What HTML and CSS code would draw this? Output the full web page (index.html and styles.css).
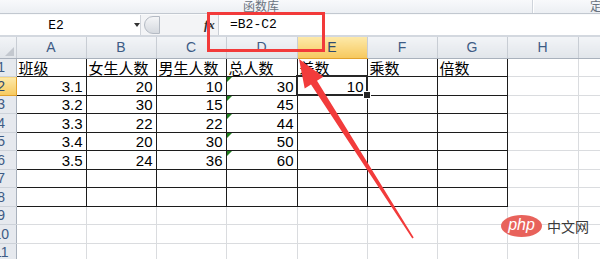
FILE: index.html
```html
<!DOCTYPE html>
<html lang="zh-CN">
<head>
    <meta charset="UTF-8">
    <meta name="viewport" content="width=device-width, initial-scale=1.0">
    <title>差数公式</title>
    <link rel="stylesheet" href="styles.css">
</head>
<body>
    <div class="ribbon">
        <div class="group"><span class="group-label">函数库</span></div>
        <div class="ribbon-sep"></div>
        <div class="group next"><span class="group-label">定</span></div>
    </div>

    <div class="formula-bar">
        <div class="name-box">
            <span class="cell-ref">E2</span>
            <span class="drop"></span>
        </div>
        <div class="bar-tools">
            <span class="grip"></span>
            <span class="fx">fx</span>
        </div>
        <div class="formula">=B2-C2</div>
    </div>

    <table class="sheet">
        <colgroup>
            <col class="c-head">
            <col class="c70"><col class="c70"><col class="c70"><col class="c71">
            <col class="c70"><col class="c70"><col class="c70"><col class="c71">
            <col class="c-rest">
        </colgroup>
        <thead>
            <tr>
                <th class="corner"><span class="corner-mark"></span></th>
                <th>A</th><th>B</th><th>C</th><th>D</th>
                <th class="active">E</th><th>F</th><th>G</th><th>H</th><th></th>
            </tr>
        </thead>
        <tbody>
            <tr>
                <th>1</th>
                <td class="text">班级</td><td class="text">女生人数</td><td class="text">男生人数</td>
                <td class="text">总人数</td><td class="text">差数</td><td class="text">乘数</td>
                <td class="text">倍数</td><td></td><td></td>
            </tr>
            <tr>
                <th class="active">2</th>
                <td>3.1</td><td>20</td><td>10</td><td class="flag">30</td>
                <td class="selected">10</td><td></td><td></td><td></td><td></td>
            </tr>
            <tr>
                <th>3</th>
                <td>3.2</td><td>30</td><td>15</td><td class="flag">45</td>
                <td></td><td></td><td></td><td></td><td></td>
            </tr>
            <tr>
                <th>4</th>
                <td>3.3</td><td>22</td><td>22</td><td class="flag">44</td>
                <td></td><td></td><td></td><td></td><td></td>
            </tr>
            <tr>
                <th>5</th>
                <td>3.4</td><td>20</td><td>30</td><td class="flag">50</td>
                <td></td><td></td><td></td><td></td><td></td>
            </tr>
            <tr>
                <th>6</th>
                <td>3.5</td><td>24</td><td>36</td><td class="flag">60</td>
                <td></td><td></td><td></td><td></td><td></td>
            </tr>
            <tr>
                <th>7</th>
                <td></td><td></td><td></td><td></td><td></td><td></td><td></td><td></td><td></td>
            </tr>
            <tr>
                <th>8</th>
                <td></td><td></td><td></td><td></td><td></td><td></td><td></td><td></td><td></td>
            </tr>
            <tr>
                <th>9</th>
                <td></td><td></td><td></td><td></td><td></td><td></td><td></td><td></td><td></td>
            </tr>
            <tr>
                <th>10</th>
                <td></td><td></td><td></td><td></td><td></td><td></td><td></td><td></td><td></td>
            </tr>
            <tr>
                <th>11</th>
                <td></td><td></td><td></td><td></td><td></td><td></td><td></td><td></td><td></td>
            </tr>
        </tbody>
    </table>

    <!-- annotation drawn over the screenshot -->
    <div class="callout"></div>
    <svg class="arrow" width="600" height="259" viewBox="0 0 600 259">
        <polygon points="299,59 323.3,76.7 317,80.7 413.7,237.6 412.3,238.4 311,84.5 304.7,88.5" fill="#f23b3b"/>
    </svg>

    <div class="watermark">
        <span class="php">php</span>
        <span class="cn">中文网</span>
    </div>
</body>
</html>
```

FILE: styles.css
```css
* {
    margin: 0;
    padding: 0;
    box-sizing: border-box;
}

body {
    width: 600px;
    height: 259px;
    overflow: hidden;
    position: relative;
    background-color: #fff;
    font-family: "Liberation Sans", "Noto Sans CJK SC", sans-serif;
    color: #000;
}

/* ribbon strip */
.ribbon {
    display: grid;
    grid-template-columns: 532px 1px 1fr;
    height: 14px;
    background: linear-gradient(#f8f9fb, #eceff3);
    border-bottom: 1px solid #c2c8d0;
    overflow: hidden;
}

.group {
    display: flex;
    align-items: flex-end;
    padding-left: 243px;
    padding-bottom: 7px;
}

.group.next {
    padding-left: 57px;
}

.group-label {
    font-family: "Noto Sans CJK SC", sans-serif;
    font-size: 12px;
    line-height: 12px;
    color: #6a7380;
}

.ribbon-sep {
    background-color: #cfd4db;
    box-shadow: 1px 0 0 #fff;
}

/* formula bar */
.formula-bar {
    display: flex;
    height: 23px;
    border-top: 1px solid #f9fafb;
    border-bottom: 2px solid #d3d8df;
    background-color: #f3f4f6;
}

.name-box {
    width: 141px;
    display: flex;
    align-items: center;
    background-color: #fff;
    border-right: 1px solid #d0d4da;
}

.cell-ref {
    width: 113px;
    text-align: center;
    font-family: "Liberation Mono", monospace;
    font-size: 13px;
}

.drop {
    margin-left: 22px;
    border-left: 3.5px solid transparent;
    border-right: 3.5px solid transparent;
    border-top: 4px solid #333;
}

.bar-tools {
    width: 77px;
    display: flex;
    align-items: center;
}

.grip {
    margin-left: 3px;
    width: 16px;
    height: 18px;
    border-radius: 9px 0 0 9px;
    border: 1px solid #b4bac3;
    background: linear-gradient(#f4f5f7, #d5d9df);
}

.fx {
    margin-left: 44px;
    font-family: "Liberation Serif", serif;
    font-style: italic;
    font-weight: bold;
    font-size: 13px;
    color: #333;
}

.formula {
    flex: 1;
    background-color: #fff;
    border-left: 1px solid #c9ced5;
    padding-left: 11px;
    font-family: "Liberation Mono", monospace;
    font-size: 13px;
    line-height: 20px;
}

/* sheet grid */
.sheet {
    border-collapse: collapse;
    table-layout: fixed;
    width: 621px;
    margin-left: -13px;
}

.c-head { width: 29px; }
.c70 { width: 70px; }
.c71 { width: 71px; }
.c-rest { width: 30px; }

.sheet th {
    font-weight: normal;
    font-size: 14px;
    color: #3d5b85;
}

.sheet thead th {
    height: 21px;
    background: linear-gradient(#f2f4f7, #e1e5ea);
    border-right: 1px solid #c8cdd4;
    border-bottom: 1px solid #a9b1bc;
}

.sheet tbody th {
    height: 18.5px;
    line-height: 16px;
    background-color: #e6e9ee;
    border-right: 1px solid #a9b1bc;
    border-bottom: 1px solid #cdd2d9;
}

.sheet th.active {
    background: linear-gradient(#fde9a9, #f6c95f);
    color: #2f4a6e;
    border-bottom-color: #e1a12d;
}

.sheet tbody th.active {
    border-right-color: #e1a12d;
}

.corner {
    position: relative;
}

.corner-mark {
    position: absolute;
    right: 2px;
    bottom: 2px;
    border-left: 9px solid transparent;
    border-bottom: 9px solid #c3c8cf;
}

.sheet td {
    height: 18.5px;
    padding: 0 3px;
    font-size: 15px;
    line-height: 16px;
    text-align: right;
    vertical-align: bottom;
    border-right: 1px solid #dadcdf;
    border-bottom: 1px solid #dadcdf;
    white-space: nowrap;
    overflow: hidden;
}

.sheet tbody tr:nth-child(-n+8) td:nth-child(-n+8) {
    border-color: #1c1c1c;
}

.sheet td.text {
    text-align: left;
    padding-left: 2px;
    font-family: "Noto Sans CJK SC", sans-serif;
}

.sheet td.flag,
.sheet td.selected {
    position: relative;
    overflow: visible;
}

.flag::before {
    content: "";
    position: absolute;
    left: 0;
    top: 0;
    border-top: 5px solid #1f7f1f;
    border-right: 5px solid transparent;
}

.selected::after {
    content: "";
    position: absolute;
    left: -2px;
    top: -2px;
    right: -1px;
    bottom: -1px;
    border: 2px solid #262626;
}

.selected::before {
    content: "";
    position: absolute;
    right: -4px;
    bottom: -4px;
    width: 6px;
    height: 6px;
    background-color: #262626;
    border: 1px solid #fff;
    z-index: 1;
}

/* annotation */
.callout {
    position: absolute;
    left: 207px;
    top: 12px;
    width: 118px;
    height: 40px;
    border: 3px solid #f23a3a;
}

.arrow {
    position: absolute;
    left: 0;
    top: 0;
}

.watermark {
    position: absolute;
    left: 501px;
    top: 215px;
    display: flex;
    align-items: center;
    gap: 5px;
}

.php {
    width: 41px;
    height: 22px;
    border-radius: 50%;
    background-color: #e8625b;
    color: #fff;
    font-family: "Liberation Sans", sans-serif;
    font-style: italic;
    font-size: 16px;
    line-height: 20px;
    text-align: center;
}

.cn {
    font-family: "Noto Sans CJK SC", sans-serif;
    font-size: 14px;
    color: #3a3a3a;
}
```
